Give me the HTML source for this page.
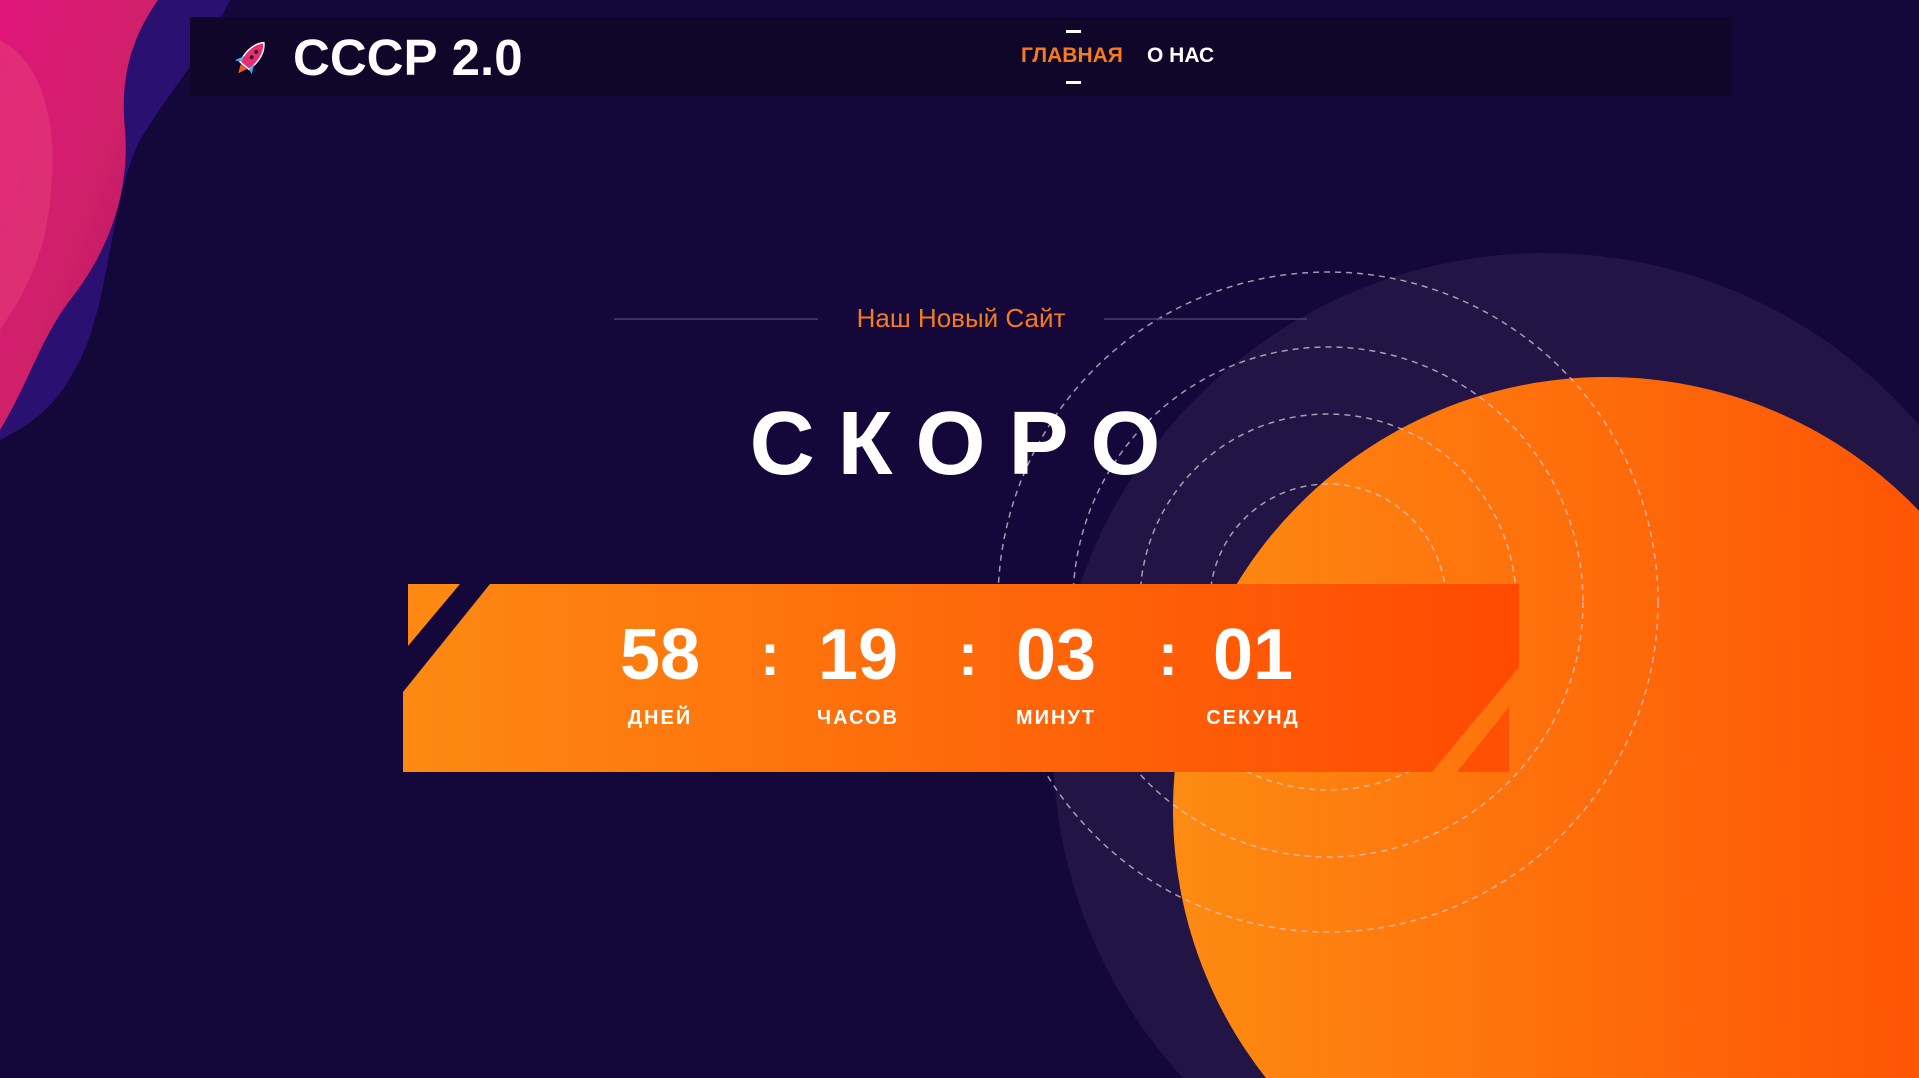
<!DOCTYPE html>
<html><head><meta charset="utf-8"><style>
*{margin:0;padding:0;box-sizing:border-box}
html,body{width:1919px;height:1078px;overflow:hidden;background:#130839;font-family:"Liberation Sans",Arial,sans-serif}
.abs{position:absolute}
svg{display:block}
</style></head><body>
<svg class="abs" style="left:0;top:0" width="1919" height="1078">
<defs>
<linearGradient id="og" x1="0" x2="1" y1="0" y2="0"><stop offset="0" stop-color="#fd8b12"/><stop offset="1" stop-color="#ff4c02"/></linearGradient>
<linearGradient id="bg2" x1="0" x2="1" y1="0" y2="0"><stop offset="0" stop-color="#fd8912"/><stop offset="1" stop-color="#ff4a02"/></linearGradient>
<linearGradient id="pk" x1="0" y1="0" x2="1" y2="1"><stop offset="0" stop-color="#e0157a"/><stop offset="0.5" stop-color="#d0206a"/><stop offset="1" stop-color="#b0105a"/></linearGradient>
</defs>
<path d="M0 0 L230 0 C200 60 170 90 140 140 C110 200 110 300 80 360 C60 400 40 420 0 440 Z" fill="#2a1070"/>
<path d="M0 0 L158 0 C130 40 120 80 125 130 C130 190 110 250 70 300 C40 340 30 380 0 430 Z" fill="url(#pk)"/>
<path d="M0 40 C40 60 60 120 50 200 C45 260 20 300 0 330 Z" fill="#e8407a" opacity="0.5"/>
<circle cx="1545" cy="745" r="492" fill="#221545"/>
<circle cx="1606" cy="810" r="433" fill="url(#og)"/>
<g fill="none" stroke="#d8c8d0" stroke-width="1.5" stroke-dasharray="6 5" opacity="0.75">
<circle cx="1328" cy="602" r="118"/><circle cx="1328" cy="602" r="188"/><circle cx="1328" cy="602" r="255"/><circle cx="1328" cy="602" r="330"/>
</g>
<rect x="190" y="17" width="1542" height="79" fill="#0f0629"/>
<polygon points="490,584 1519,584 1519,667 1432,772 403,772 403,692" fill="url(#bg2)"/>
<polygon points="408,584 460,584 408,646" fill="#fd8912"/>
<polygon points="1509,707 1509,772 1457,772" fill="#ff5004"/>
<line x1="614" y1="319" x2="818" y2="319" stroke="#4a3f6a" stroke-width="1.5"/>
<line x1="1104" y1="319" x2="1307" y2="319" stroke="#4a3f6a" stroke-width="1.5"/>
<g transform="translate(251,58) rotate(40)">
<path d="M0 -20 C8 -12 8 0 6 10 L-6 10 C-8 0 -8 -12 0 -20Z" fill="#ea2c74" stroke="#fff" stroke-width="1.5"/>
<circle cx="0" cy="-8" r="2" fill="#222"/><circle cx="0" cy="-1" r="2" fill="#222"/>
<path d="M-6 2 L-11 12 L-6 10Z M6 2 L11 12 L6 10Z" fill="#37b4e6"/>
<path d="M-4 11 L0 20 L4 11Z" fill="#f05a1a"/>
</g>
<rect x="1066" y="30" width="15" height="3" fill="#fff"/>
<rect x="1066" y="81" width="15" height="3" fill="#fff"/>
</svg>
<div class="abs" style="left:293px;top:28px;font-size:51px;font-weight:bold;color:#fff;line-height:60px">СССР 2.0</div>
<div class="abs" style="left:1021px;top:44px;font-size:21px;font-weight:bold;color:#f57b1e;line-height:24px">ГЛАВНАЯ</div>
<div class="abs" style="left:1147px;top:44px;font-size:21px;font-weight:bold;color:#fff;line-height:24px">О НАС</div>
<div class="abs" style="left:761px;width:400px;top:302px;text-align:center;font-size:26px;color:#f57b1e;line-height:32px">Наш Новый Сайт</div>
<div class="abs" style="left:645px;width:620px;top:394px;text-align:center;font-size:90px;font-weight:bold;color:#fff;letter-spacing:23px;line-height:100px;padding-left:23px">СКОРО</div>
<div class="abs" style="left:590px;width:140px;top:615px;text-align:center;font-size:72px;font-weight:bold;color:#fff;line-height:80px">58</div>
<div class="abs" style="left:788px;width:140px;top:615px;text-align:center;font-size:72px;font-weight:bold;color:#fff;line-height:80px">19</div>
<div class="abs" style="left:986px;width:140px;top:615px;text-align:center;font-size:72px;font-weight:bold;color:#fff;line-height:80px">03</div>
<div class="abs" style="left:1183px;width:140px;top:615px;text-align:center;font-size:72px;font-weight:bold;color:#fff;line-height:80px">01</div>
<div class="abs" style="left:750px;width:40px;top:620px;text-align:center;font-size:60px;font-weight:bold;color:#fff;line-height:70px">:</div>
<div class="abs" style="left:948px;width:40px;top:620px;text-align:center;font-size:60px;font-weight:bold;color:#fff;line-height:70px">:</div>
<div class="abs" style="left:1148px;width:40px;top:620px;text-align:center;font-size:60px;font-weight:bold;color:#fff;line-height:70px">:</div>
<div class="abs" style="left:580px;width:160px;top:707px;text-align:center;font-size:20px;font-weight:bold;color:#fff;letter-spacing:2px;line-height:22px">ДНЕЙ</div>
<div class="abs" style="left:778px;width:160px;top:707px;text-align:center;font-size:20px;font-weight:bold;color:#fff;letter-spacing:2px;line-height:22px">ЧАСОВ</div>
<div class="abs" style="left:976px;width:160px;top:707px;text-align:center;font-size:20px;font-weight:bold;color:#fff;letter-spacing:2px;line-height:22px">МИНУТ</div>
<div class="abs" style="left:1173px;width:160px;top:707px;text-align:center;font-size:20px;font-weight:bold;color:#fff;letter-spacing:2px;line-height:22px">СЕКУНД</div>
</body></html>
